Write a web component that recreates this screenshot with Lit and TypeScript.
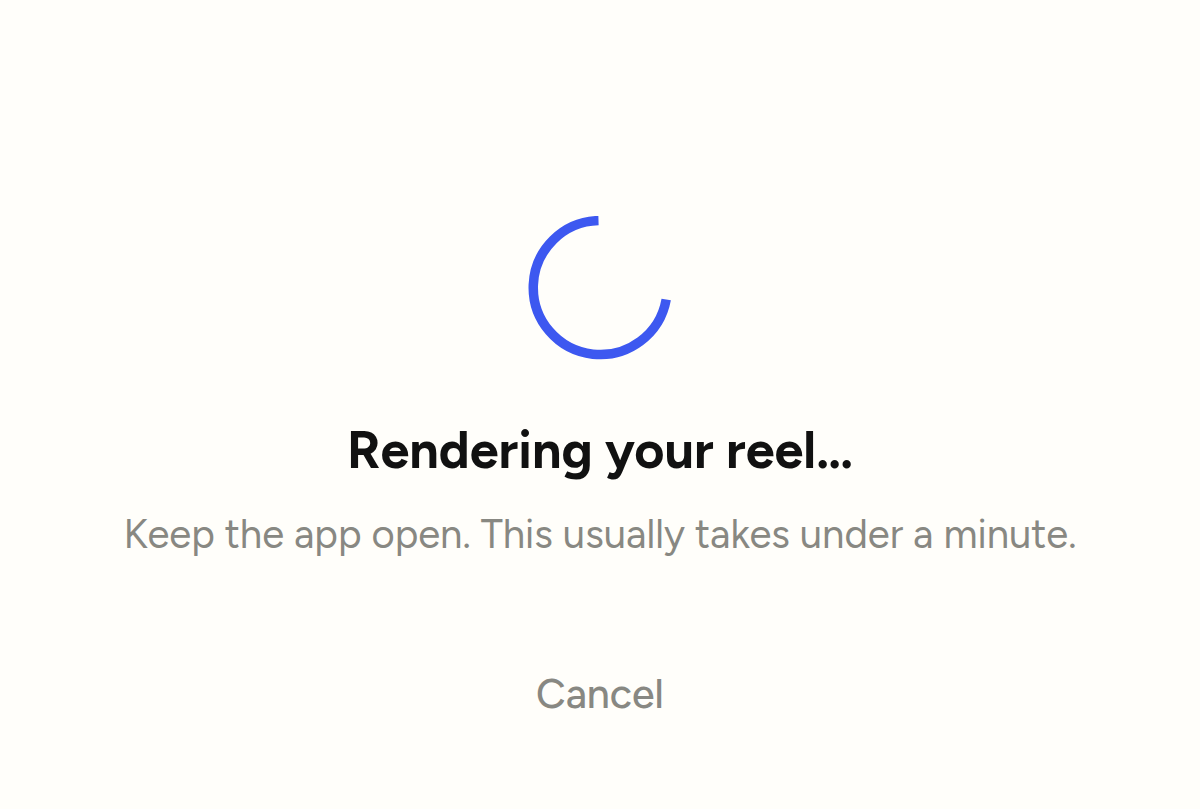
import { LitElement, html, css } from "lit";
import { customElement } from "lit/decorators.js";

@customElement("app-root")
export class AppRoot extends LitElement {
  static styles = css`
    :host {
      display: block;
      min-height: 100vh;
      background: #fffefa;
      font-family: "Figtree", "Lato", "Open Sans", sans-serif;
    }
    .screen {
      display: flex;
      flex-direction: column;
      align-items: center;
      padding: 216px 24px 80px;
      text-align: center;
    }
    .spinner {
      display: block;
      width: 144px;
      height: 144px;
    }
    .title {
      margin: 60px 0 0;
      font-size: 52px;
      line-height: 60px;
      font-weight: 700;
      color: #111111;
    }
    .hint {
      margin: 30px 0 0;
      font-size: 40px;
      line-height: 48px;
      color: #888882;
    }
    .cancel {
      margin: 108px 0 0;
      padding: 0 16px;
      border: 0;
      background: none;
      font: inherit;
      font-size: 41px;
      font-weight: 500;
      line-height: 56px;
      color: #888882;
      cursor: pointer;
    }
  `;

  render() {
    return html`
      <main class="screen">
        <svg class="spinner" viewBox="0 0 144 144" fill="none" role="img" aria-label="Rendering">
          <path d="M70.5 4.6A67 67 0 1 0 138.2 83.5" stroke="#3d58f0" stroke-width="9.5" />
        </svg>
        <h1 class="title">Rendering your reel…</h1>
        <p class="hint">Keep the app open. This usually takes under a minute.</p>
        <button class="cancel" type="button">Cancel</button>
      </main>
    `;
  }
}
